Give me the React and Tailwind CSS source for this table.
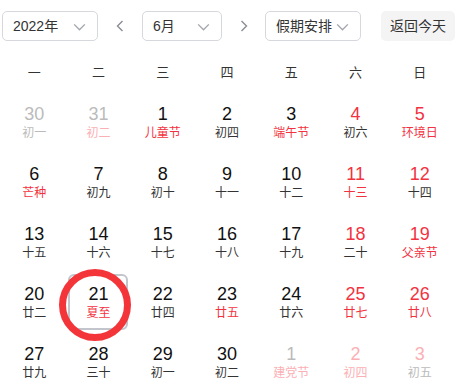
import React from 'react'

const RED = 'text-[#f2333f]'
const DARK = 'text-[#111]'
const LUNAR = 'text-[#333]'
const GRAY = 'text-[#bbb]'
const PINK = 'text-[#fbb0b5]'

const rows = [
  [
    ['30', GRAY, '初一', GRAY],
    ['31', GRAY, '初二', PINK],
    ['1', DARK, '儿童节', RED],
    ['2', DARK, '初四', LUNAR],
    ['3', DARK, '端午节', RED],
    ['4', RED, '初六', LUNAR],
    ['5', RED, '环境日', RED],
  ],
  [
    ['6', DARK, '芒种', RED],
    ['7', DARK, '初九', LUNAR],
    ['8', DARK, '初十', LUNAR],
    ['9', DARK, '十一', LUNAR],
    ['10', DARK, '十二', LUNAR],
    ['11', RED, '十三', RED],
    ['12', RED, '十四', LUNAR],
  ],
  [
    ['13', DARK, '十五', LUNAR],
    ['14', DARK, '十六', LUNAR],
    ['15', DARK, '十七', LUNAR],
    ['16', DARK, '十八', LUNAR],
    ['17', DARK, '十九', LUNAR],
    ['18', RED, '二十', LUNAR],
    ['19', RED, '父亲节', RED],
  ],
  [
    ['20', DARK, '廿二', LUNAR],
    ['21', DARK, '夏至', RED, true],
    ['22', DARK, '廿四', LUNAR],
    ['23', DARK, '廿五', RED],
    ['24', DARK, '廿六', LUNAR],
    ['25', RED, '廿七', RED],
    ['26', RED, '廿八', RED],
  ],
  [
    ['27', DARK, '廿九', LUNAR],
    ['28', DARK, '三十', LUNAR],
    ['29', DARK, '初一', LUNAR],
    ['30', DARK, '初二', LUNAR],
    ['1', GRAY, '建党节', PINK],
    ['2', PINK, '初四', PINK],
    ['3', PINK, '初五', GRAY],
  ],
]

const weekdays = ['一', '二', '三', '四', '五', '六', '日']

function Chevron({ className }) {
  return (
    <svg viewBox="0 0 16 16" className={className} fill="none" stroke="currentColor" strokeWidth="1.3">
      <path d="M3 6l5 5 5-5" />
    </svg>
  )
}

function Select({ label, width }) {
  return (
    <div className={`flex items-center justify-between h-[30px] border border-[#d6d8de] rounded-[5px] pl-[10px] pr-[9px] ${width}`}>
      <span className="text-[14px] text-[#333]">{label}</span>
      <Chevron className="w-[17px] h-[17px] text-[#a3a6ad]" />
    </div>
  )
}

function Arrow({ dir }) {
  return (
    <svg viewBox="0 0 16 16" className="w-[16px] h-[16px] text-[#8a8d94]" fill="none" stroke="currentColor" strokeWidth="1.4">
      <path d={dir === 'left' ? 'M10.5 3l-5 5 5 5' : 'M5.5 3l5 5-5 5'} />
    </svg>
  )
}

function Cell({ day, dayColor, lunar, lunarColor, selected }) {
  return (
    <div className="relative flex items-center justify-center h-[60px]">
      <div
        className={`flex flex-col items-center justify-center w-[60px] h-[56px] rounded-[6px] ${
          selected ? 'border-2 border-[#c2c5cc]' : ''
        }`}
      >
        <span className={`text-[18px] leading-[20px] ${dayColor}`}>{day}</span>
        <span className={`text-[12px] leading-[16px] mt-[1px] ${lunarColor}`}>{lunar}</span>
      </div>
      {selected && (
        <div className="absolute left-[-7px] top-[-3px] w-[72px] h-[72px] rounded-full border-[7px] border-[#f3353a]" />
      )}
    </div>
  )
}

export default function App() {
  return (
    <div
      className="w-[457px] h-[387px] bg-white overflow-hidden"
      style={{ fontFamily: '"Liberation Sans", "Noto Sans CJK SC", sans-serif' }}
    >
      <div className="flex items-center pt-[11px] pl-[2px]">
        <Select label="2022年" width="w-[96px]" />
        <div className="w-[44px] flex justify-center">
          <Arrow dir="left" />
        </div>
        <Select label="6月" width="w-[80px]" />
        <div className="w-[43px] flex justify-center">
          <Arrow dir="right" />
        </div>
        <Select label="假期安排" width="w-[96px]" />
        <div className="ml-[20px] h-[30px] px-[9px] flex items-center rounded-[5px] bg-[#f4f4f5] text-[14px] text-[#333]">
          返回今天
        </div>
      </div>

      <div className="grid grid-cols-7 w-[450px] ml-[2px] mt-[16px] h-[32px] items-center">
        {weekdays.map((w) => (
          <div key={w} className="text-center text-[13px] text-[#333]">
            {w}
          </div>
        ))}
      </div>

      <div className="grid grid-cols-7 w-[450px] ml-[2px] mt-[3px]">
        {rows.flat().map((c, i) => (
          <Cell key={i} day={c[0]} dayColor={c[1]} lunar={c[2]} lunarColor={c[3]} selected={c[4]} />
        ))}
      </div>
    </div>
  )
}
